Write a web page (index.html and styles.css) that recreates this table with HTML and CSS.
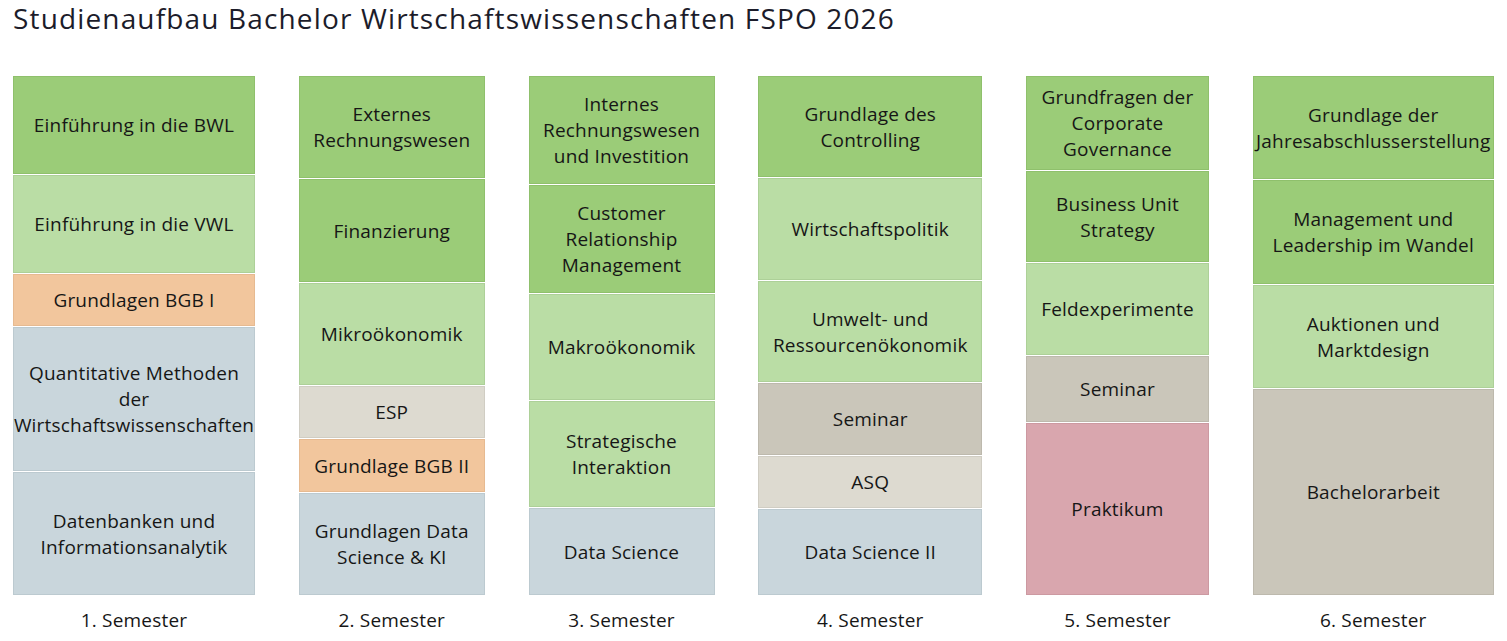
FILE: index.html
```html
<!DOCTYPE html>
<html lang="de">
<head>
<meta charset="utf-8">
<title>Studienaufbau Bachelor Wirtschaftswissenschaften FSPO 2026</title>
<link rel="stylesheet" href="styles.css">
</head>
<body>
<h1 class="title">Studienaufbau Bachelor Wirtschaftswissenschaften FSPO 2026</h1>
<div class="plan">
  <div class="semester">
    <div class="stack">
      <div class="mod core" style="height:98px">Einführung in die BWL</div>
      <div class="mod econ" style="height:98px">Einführung in die VWL</div>
      <div class="mod law" style="height:52px">Grundlagen BGB I</div>
      <div class="mod quant" style="height:144px">Quantitative Methoden der Wirtschaftswissenschaften</div>
      <div class="mod quant" style="height:123px">Datenbanken und Informationsanalytik</div>
    </div>
    <div class="label">1. Semester</div>
  </div>
  <div class="semester">
    <div class="stack">
      <div class="mod core" style="height:102px">Externes Rechnungswesen</div>
      <div class="mod core" style="height:103px">Finanzierung</div>
      <div class="mod econ" style="height:102px">Mikroökonomik</div>
      <div class="mod key" style="height:52px">ESP</div>
      <div class="mod law" style="height:53px">Grundlage BGB II</div>
      <div class="mod quant" style="height:102px">Grundlagen Data Science &amp; KI</div>
    </div>
    <div class="label">2. Semester</div>
  </div>
  <div class="semester">
    <div class="stack">
      <div class="mod core" style="height:108px">Internes Rechnungswesen und Investition</div>
      <div class="mod core" style="height:108px">Customer Relationship Management</div>
      <div class="mod econ" style="height:106px">Makroökonomik</div>
      <div class="mod econ" style="height:106px">Strategische Interaktion</div>
      <div class="mod quant" style="height:87px">Data Science</div>
    </div>
    <div class="label">3. Semester</div>
  </div>
  <div class="semester">
    <div class="stack">
      <div class="mod core" style="height:101px">Grundlage des Controlling</div>
      <div class="mod econ" style="height:102px">Wirtschaftspolitik</div>
      <div class="mod econ" style="height:101px">Umwelt- und Ressourcenökonomik</div>
      <div class="mod seminar" style="height:72px">Seminar</div>
      <div class="mod key" style="height:52px">ASQ</div>
      <div class="mod quant" style="height:86px">Data Science II</div>
    </div>
    <div class="label">4. Semester</div>
  </div>
  <div class="semester">
    <div class="stack">
      <div class="mod core" style="height:94px">Grundfragen der Corporate Governance</div>
      <div class="mod core" style="height:91px">Business Unit Strategy</div>
      <div class="mod econ" style="height:92px">Feldexperimente</div>
      <div class="mod seminar" style="height:66px">Seminar</div>
      <div class="mod intern" style="height:172px">Praktikum</div>
    </div>
    <div class="label">5. Semester</div>
  </div>
  <div class="semester">
    <div class="stack">
      <div class="mod core" style="height:103px">Grundlage der Jahresabschlusserstellung</div>
      <div class="mod core" style="height:104px">Management und Leadership im Wandel</div>
      <div class="mod econ" style="height:103px">Auktionen und Marktdesign</div>
      <div class="mod seminar" style="height:206px">Bachelorarbeit</div>
    </div>
    <div class="label">6. Semester</div>
  </div>
</div>
</body>
</html>
```
FILE: styles.css
```css
html, body {
  margin: 0;
  padding: 0;
  background: #ffffff;
}

body {
  padding: 0 13px;
  font-family: "Open Sans", "Noto Sans", sans-serif;
  color: #161616;
}

.title {
  margin: 0;
  padding-top: 0;
  font-size: 28px;
  font-weight: 400;
  line-height: 36px;
  letter-spacing: 1.15px;
  color: #1c1c2a;
}

.plan {
  margin-top: 40px;
  display: grid;
  grid-template-columns: 242px 186px 186px 224px 183px 241px;
  column-gap: 43.75px;
  align-items: start;
}

.semester {
  display: flex;
  flex-direction: column;
}

.stack {
  display: flex;
  flex-direction: column;
  gap: 1px;
}

.mod {
  box-sizing: border-box;
  display: flex;
  align-items: center;
  justify-content: center;
  text-align: center;
  font-size: 19px;
  line-height: 26px;
  letter-spacing: 0.2px;
  border: 1px solid transparent;
  overflow: visible;
  white-space: normal;
}

.core {
  background: #9bcc78;
  border-color: #8fc06c;
}

.econ {
  background: #badda5;
  border-color: #add098;
}

.law {
  background: #f2c69d;
  border-color: #e6ba91;
}

.quant {
  background: #c9d6dc;
  border-color: #bccad0;
}

.key {
  background: #dddad0;
  border-color: #d0cdc3;
}

.seminar {
  background: #cac6ba;
  border-color: #bdb9ad;
}

.intern {
  background: #d9a6ae;
  border-color: #cc99a1;
}

.label {
  margin-top: 12px;
  text-align: center;
  font-size: 19px;
  line-height: 26px;
  letter-spacing: 0.2px;
}
```
